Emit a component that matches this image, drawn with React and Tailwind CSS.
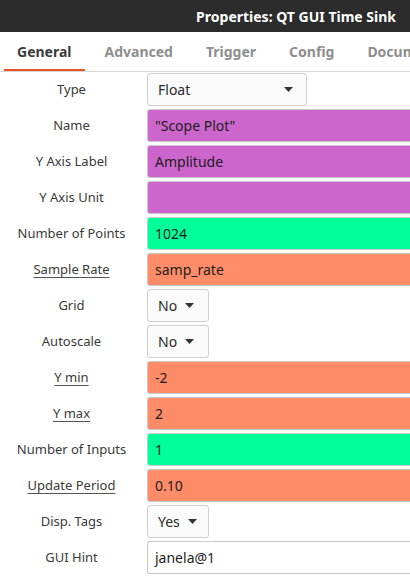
import React from "react";

const rows = [
  { label: "Type", kind: "select", value: "Float", wide: true },
  { label: "Name", kind: "text", value: "\"Scope Plot\"", color: "bg-[#cc66cc]" },
  { label: "Y Axis Label", kind: "text", value: "Amplitude", color: "bg-[#cc66cc]" },
  { label: "Y Axis Unit", kind: "text", value: "", color: "bg-[#cc66cc]" },
  { label: "Number of Points", kind: "text", value: "1024", color: "bg-[#00ff99]" },
  { label: "Sample Rate", kind: "text", value: "samp_rate", color: "bg-[#ff8c69]", underline: true },
  { label: "Grid", kind: "select", value: "No" },
  { label: "Autoscale", kind: "select", value: "No" },
  { label: "Y min", kind: "text", value: "-2", color: "bg-[#ff8c69]", underline: true },
  { label: "Y max", kind: "text", value: "2", color: "bg-[#ff8c69]", underline: true },
  { label: "Number of Inputs", kind: "text", value: "1", color: "bg-[#00ff99]" },
  { label: "Update Period", kind: "text", value: "0.10", color: "bg-[#ff8c69]", underline: true },
  { label: "Disp. Tags", kind: "select", value: "Yes" },
  { label: "GUI Hint", kind: "text", value: "janela@1", color: "bg-white" },
];

const tabs = ["General", "Advanced", "Trigger", "Config", "Documentation"];

function Caret() {
  return (
    <svg width="9" height="5" viewBox="0 0 9 5" className="shrink-0">
      <path d="M0 0 L9 0 L4.5 5 Z" fill="#333" />
    </svg>
  );
}

function Field({ row }) {
  if (row.kind === "select") {
    return (
      <div
        className={`h-[33px] rounded-[3px] border border-[#cfcfcf] bg-[#fbfbfb] flex items-center text-[14px] text-[#2a2a2a] ${
          row.wide ? "w-[160px] pl-[10px] pr-[13px] justify-between" : "w-[62px] pl-[10px] gap-[8px]"
        }`}
      >
        <span>{row.value}</span>
        <Caret />
      </div>
    );
  }
  return (
    <div
      className={`h-[33px] rounded-l-[3px] border border-r-0 border-[#c9c9c9] ${row.color} flex items-center pl-[7px] text-[14px] text-[#1c1c1c]`}
    >
      {row.value}
    </div>
  );
}

export default function App() {
  return (
    <div className="w-[410px] h-[578px] overflow-hidden bg-white font-['Noto_Sans',sans-serif]">
      <div className="h-[32px] bg-[#2c2c2c] flex items-center justify-end pr-[14px]">
        <span className="text-white font-bold text-[14px] whitespace-nowrap">
          Properties: QT GUI Time Sink
        </span>
      </div>

      <div className="h-[40px] flex items-stretch border-b border-[#d6d6d6] pl-[4px] gap-[7px] whitespace-nowrap overflow-hidden">
        {tabs.map((t, i) => (
          <div
            key={t}
            className={`px-[13px] pt-[1px] flex items-center font-bold text-[14px] border-b-[3px] -mb-px ${
              i === 0 ? "text-[#3b3b3b] border-[#e95420]" : "text-[#8e8e8e] border-transparent"
            }`}
          >
            {t}
          </div>
        ))}
      </div>

      <div className="flex flex-col gap-[3px] pt-[1px]">
        {rows.map((row) => (
          <div key={row.label} className="grid grid-cols-[143px_1fr] gap-[4px] items-center">
            <div className="text-center text-[13px] text-[#3a3a3a]">
              <span className={row.underline ? "underline underline-offset-[3px] decoration-[#555]" : ""}>
                {row.label}
              </span>
            </div>
            <div className="flex">
              <div className={row.kind === "select" ? "" : "flex-1"}>
                <Field row={row} />
              </div>
            </div>
          </div>
        ))}
      </div>
    </div>
  );
}
